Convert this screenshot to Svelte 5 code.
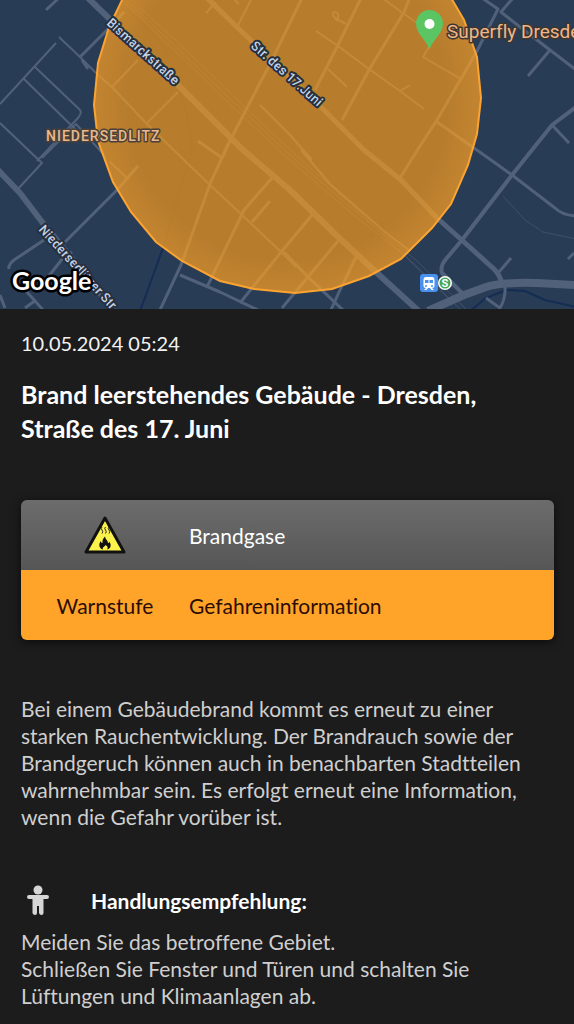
<script lang="ts">
  interface Road {
    d: string;
    w: number;
  }

  const warning = {
    date: "10.05.2024 05:24",
    title: "Brand leerstehendes Gebäude - Dresden, Straße des 17. Juni",
    event: "Brandgase",
    level: "Gefahreninformation",
    description:
      "Bei einem Gebäudebrand kommt es erneut zu einer starken Rauchentwicklung. Der Brandrauch sowie der Brandgeruch können auch in benachbarten Stadtteilen wahrnehmbar sein. Es erfolgt erneut eine Information, wenn die Gefahr vorüber ist.",
    advice: [
      "Meiden Sie das betroffene Gebiet.",
      "Schließen Sie Fenster und Türen und schalten Sie Lüftungen und Klimaanlagen ab.",
    ],
  };

  // Main streets first, then side streets, all in map units.
  const roads: Road[] = [
    { d: "M88 -2L183 90L243 150L290 190L334 233L377 273L422 314", w: 6 },
    { d: "M205 -4L240 30L324 110L364 150L401 180L437 218L464 242L494 269Q500 275 502 284", w: 5 },
    { d: "M-2 170L20 193L42 222L120 318", w: 6 },
    { d: "M428 311L464 295L486 287Q502 282 537 283L576 285", w: 8 },
    { d: "M437 122L491 160L512 175L555 208Q562 215 576 216", w: 3 },
    { d: "M576 107L552 125L524 160L512 175L462 240L446 259Q440 266 442 273L464 295", w: 4 },
    { d: "M552 125L569 143", w: 3 },
    { d: "M499 272L511 258", w: 3 },
    { d: "M505 285Q506 298 500 308L486 298", w: 3 },
    { d: "M574 253L568 259", w: 3 },
    { d: "M0 104L56 43M35 67L79 109Q83 112 78 118L37 161M24 79L76 130", w: 2 },
    { d: "M59 37L80 57L98 75L112 87L145 122L184 160L210 185L242 215L280 251L296 267", w: 2 },
    { d: "M80 57L108 29L124 12M61 -4L46 10M82 60L88 69", w: 3 },
    { d: "M112 87L138 60M147 123L178 92M127 178L138 166M110 162L127 178", w: 2 },
    { d: "M0 123L42 163M28 150L42 163L17 190M42 158L76 124L104 155", w: 2 },
    { d: "M65 242L117 190L138 166", w: 3 },
    { d: "M9 269Q8 265 14 260L44 240M48 277L63 258L72 252M0 295L5 308M26 291L44 311M25 308L36 300", w: 3 },
    { d: "M222 158L234 133L272 60L304 -6M222 158L198 141", w: 3 },
    { d: "M160 310L181 265L210 184L230 140", w: 3 },
    { d: "M180 275L220 292L260 311M207 287L244 210L272 178", w: 3 },
    { d: "M240 303L282 251L312 215M252 222L270 201", w: 3 },
    { d: "M282 308L308 277L338 241M330 312L340 290L356 257M284 252L308 277L345 312", w: 3 },
    { d: "M238 25L252 -2M206 13L216 2M233 -2L239 4", w: 2 },
    { d: "M315 90L338 45L362 -4M342 120L369 70L404 12L410 -3", w: 3 },
    { d: "M316 31L338 46L369 69L400 91L424 109M328 69L347 87M400 91L410 85", w: 2 },
    { d: "M346 24L335 18Q330 12 336 12Q341 15 336 21M382 -2L403 13L424 28", w: 2 },
    { d: "M430 45L423 57L461 79", w: 2 },
    { d: "M400 178L420 146L437 120L476 53L498 9L482 -2", w: 3 },
    { d: "M513 -2L501 12L520 27L550 50L576 70M550 50L528 76", w: 3 },
    { d: "M260 105L290 135L312 160M301 150L330 184L385 232L410 251", w: 2 },
  ];

  const rails = [
    "M118 -4L172 48L234 108L284 155L350 212L410 260L460 309",
    "M122 -4L178 49L240 108L290 155L356 212L416 260L466 309",
    "M127 -4L186 50L250 112L298 157L352 205L403 254L450 300",
  ];

  // The affected area is a polygon, so its corners stay visible.
  const area =
    "M124 -4L109 27L98 63L94 105L98 141L113 182L131 212L156 242L182 261L220 281L254 289L295 293L332 289L369 276L401 259L432 228L451 204L468 165L477 134L481 98L477 57L464 20L450 -4Z";
</script>

<main>
  <svg class="map" viewBox="0 0 574 309" role="img" aria-label="Karte Niedersedlitz">
    <defs>
      <path id="bismarck" d="M106 24L204 112" />
      <path id="juni" d="M250 47L349 135" />
      <path id="niedersedlitzer" d="M38 230L129 330" />
      <radialGradient id="tint" cx="287" cy="100" r="200" gradientUnits="userSpaceOnUse">
        <stop offset="0.8" stop-color="#fea83c" stop-opacity="0" />
        <stop offset="1" stop-color="#fea83c" stop-opacity="0.2" />
      </radialGradient>
    </defs>

    <rect width="574" height="309" class="ground" />
    <path d="M163 248L151 281L140 311M470 311L486 298L506 290L525 291L545 300L576 307" class="water" />
    <path d="M130 12Q178 55 176 80Q193 130 192 150L163 248" class="border-line" />
    {#each rails as d}
      <path {d} class="rail" />
    {/each}
    <path d="M503 196L525 220L543 232L576 239" class="rail" />
    {#each roads as road}
      <path d={road.d} stroke-width={road.w} class="road" />
    {/each}
    <path d={area} class="area" />
    <path d={area} fill="url(#tint)" />

    <text class="street"><textPath href="#bismarck">Bismarckstraße</textPath></text>
    <text class="street"><textPath href="#juni">Str. des 17.Juni</textPath></text>
    <text class="street"><textPath href="#niedersedlitzer">Niedersedlitzer Str.</textPath></text>
    <text x="46" y="141" class="district">NIEDERSEDLITZ</text>

    <!-- Place pin -->
    <path
      d="M429.500 50C427.500 41 416 34 416 23.500A13.500 13.500 0 0 1 443 23.500C443 34 431.500 41 429.500 50Z"
      fill="#5bc563"
    />
    <circle cx="429.500" cy="24" r="5" fill="#fff" />
    <text x="447" y="38" class="place">Superfly Dresden</text>

    <!-- Station -->
    <g>
      <rect x="420" y="274" width="18" height="18" rx="3" fill="#4a90ed" />
      <path
        d="M426 277H432Q434.500 277 434.500 280V286Q434.500 288 432 288L434 290H431.500L430 288H428L426.500 290H424L426 288Q423.500 288 423.500 286V280Q423.500 277 426 277Z"
        fill="#fff"
      />
      <path d="M425 280H428.500V283H425ZM429.500 280H433V283H429.500Z" fill="#4a90ed" />
      <circle cx="426" cy="286" r="1" fill="#4a90ed" />
      <circle cx="432" cy="286" r="1" fill="#4a90ed" />
      <circle cx="445" cy="283" r="7" fill="#fff" />
      <circle cx="445" cy="283" r="5.500" fill="#45a65a" />
      <text x="445" y="287" class="sbahn">S</text>
    </g>

    <text x="12" y="290" class="google">Google</text>
  </svg>

  <article>
    <time datetime="2024-05-10T05:24">{warning.date}</time>
    <h1>{warning.title}</h1>

    <table>
      <tbody>
        <tr class="event">
          <th scope="row">
            <svg class="hazard" viewBox="0 0 42 38" role="img" aria-label="Warnung">
              <path d="M21 2L40 36H2Z" fill="#fbf34b" stroke="#111" stroke-width="3" stroke-linejoin="round" />
              <path
                d="M18 11Q16.500 12.500 18 14T18 17.500M21.500 11Q20 12.500 21.500 14T21.500 17.500M25 11Q23.500 12.500 25 14T25 17.500"
                fill="none"
                stroke="#222"
              />
              <path
                d="M19 33.500C14.500 32.500 14.500 27.500 17 25C17 26.500 17.500 27 18.500 27C18 24 19.500 22 21 20.500C21 23 24 24.500 24 27C25 27 25 26.500 25 25.500C27.500 28 27.500 32.500 23 33.500C24.500 31.500 23.500 30.500 21.500 29C21 30.500 18 31 19 33.500Z"
                fill="#111"
              />
            </svg>
          </th>
          <td>{warning.event}</td>
        </tr>
        <tr class="level">
          <th scope="row">Warnstufe</th>
          <td>{warning.level}</td>
        </tr>
      </tbody>
    </table>

    <p>{warning.description}</p>

    <section>
      <h2>
        <svg class="person" viewBox="0 0 24 32" aria-hidden="true">
          <circle cx="12" cy="5" r="4.500" />
          <path
            d="M3 10H21Q23 10 23 12T21 14H17.500V28Q17.500 30 15.500 30T13 28V21H11V28Q11 30 9 30T6.500 28V14H3Q1 14 1 12T3 10Z"
          />
        </svg>
        Handlungsempfehlung:
      </h2>
      {#each warning.advice as line}
        <p>{line}</p>
      {/each}
    </section>
  </article>
</main>

<style>
  :global(body) {
    margin: 0;
    background: #1c1c1c;
  }

  main {
    font-family: Lato, "Noto Sans", sans-serif;
    font-size: 21px;
    line-height: 27px;
    font-variant-ligatures: none;
    color: #cfcfcf;
  }

  .map {
    display: block;
    width: 100%;
    height: auto;
  }

  .ground {
    fill: #293c55;
  }
  .road {
    fill: none;
    stroke: #51617a;
    stroke-linejoin: round;
  }
  .rail {
    fill: none;
    stroke: #405069;
    stroke-width: 1;
  }
  .water {
    fill: none;
    stroke: #152d55;
    stroke-width: 2;
  }
  .border-line {
    fill: none;
    stroke: #20304a;
    stroke-width: 1;
  }
  .area {
    fill: rgba(254, 158, 26, 0.67);
    stroke: #fba330;
    stroke-width: 2;
  }

  .street,
  .district,
  .place,
  .google {
    font-family: Roboto, sans-serif;
    paint-order: stroke;
    stroke: #26303f;
    stroke-width: 4px;
    stroke-linejoin: round;
  }
  .street {
    font-size: 13px;
    font-weight: 500;
    fill: #c5d3e6;
  }
  .district {
    font-size: 14px;
    font-weight: 500;
    letter-spacing: 1px;
    fill: #e8b98f;
    stroke: #4c4138;
    stroke-width: 3px;
  }
  .place {
    font-size: 19px;
    fill: #efb68b;
    stroke: #3c3630;
    stroke-width: 3px;
  }
  .google {
    font-family: Lato, sans-serif;
    font-size: 25px;
    font-weight: 700;
    fill: #fff;
    stroke: #000;
    stroke-width: 5px;
  }
  .sbahn {
    font-family: Roboto, sans-serif;
    font-size: 11px;
    font-weight: 700;
    text-anchor: middle;
    fill: #fff;
  }

  article {
    padding: 21px 20px 14px 21px;
  }

  time {
    display: block;
    font-size: 20px;
    color: #f2f2f2;
  }

  h1 {
    margin: 20px 0 0;
    font-size: 25px;
    line-height: 34px;
    font-weight: 700;
    color: #fff;
  }

  table {
    width: 100%;
    margin: 55px 0;
    border-collapse: collapse;
    table-layout: fixed;
    border-radius: 6px;
    overflow: hidden;
    box-shadow: 0 2px 10px rgba(0, 0, 0, 0.6);
  }
  th,
  td {
    height: 70px;
    padding: 0;
    font-weight: 400;
    text-align: left;
  }
  th {
    width: 168px;
    text-align: center;
  }
  .event {
    background: linear-gradient(#6c6c6c, #565656);
    color: #fff;
  }
  .level {
    background: #ffa329;
    color: #2a0d05;
  }
  .hazard {
    display: block;
    width: 42px;
    height: 38px;
    margin: 0 auto;
  }

  p {
    margin: 0;
  }

  h2 {
    display: flex;
    align-items: center;
    gap: 41px;
    margin: 55px 0 11px;
    padding-left: 5px;
    font-size: 21px;
    line-height: 32px;
    font-weight: 700;
    color: #fff;
  }
  .person {
    width: 24px;
    height: 32px;
    fill: #d6d6d6;
  }
</style>
